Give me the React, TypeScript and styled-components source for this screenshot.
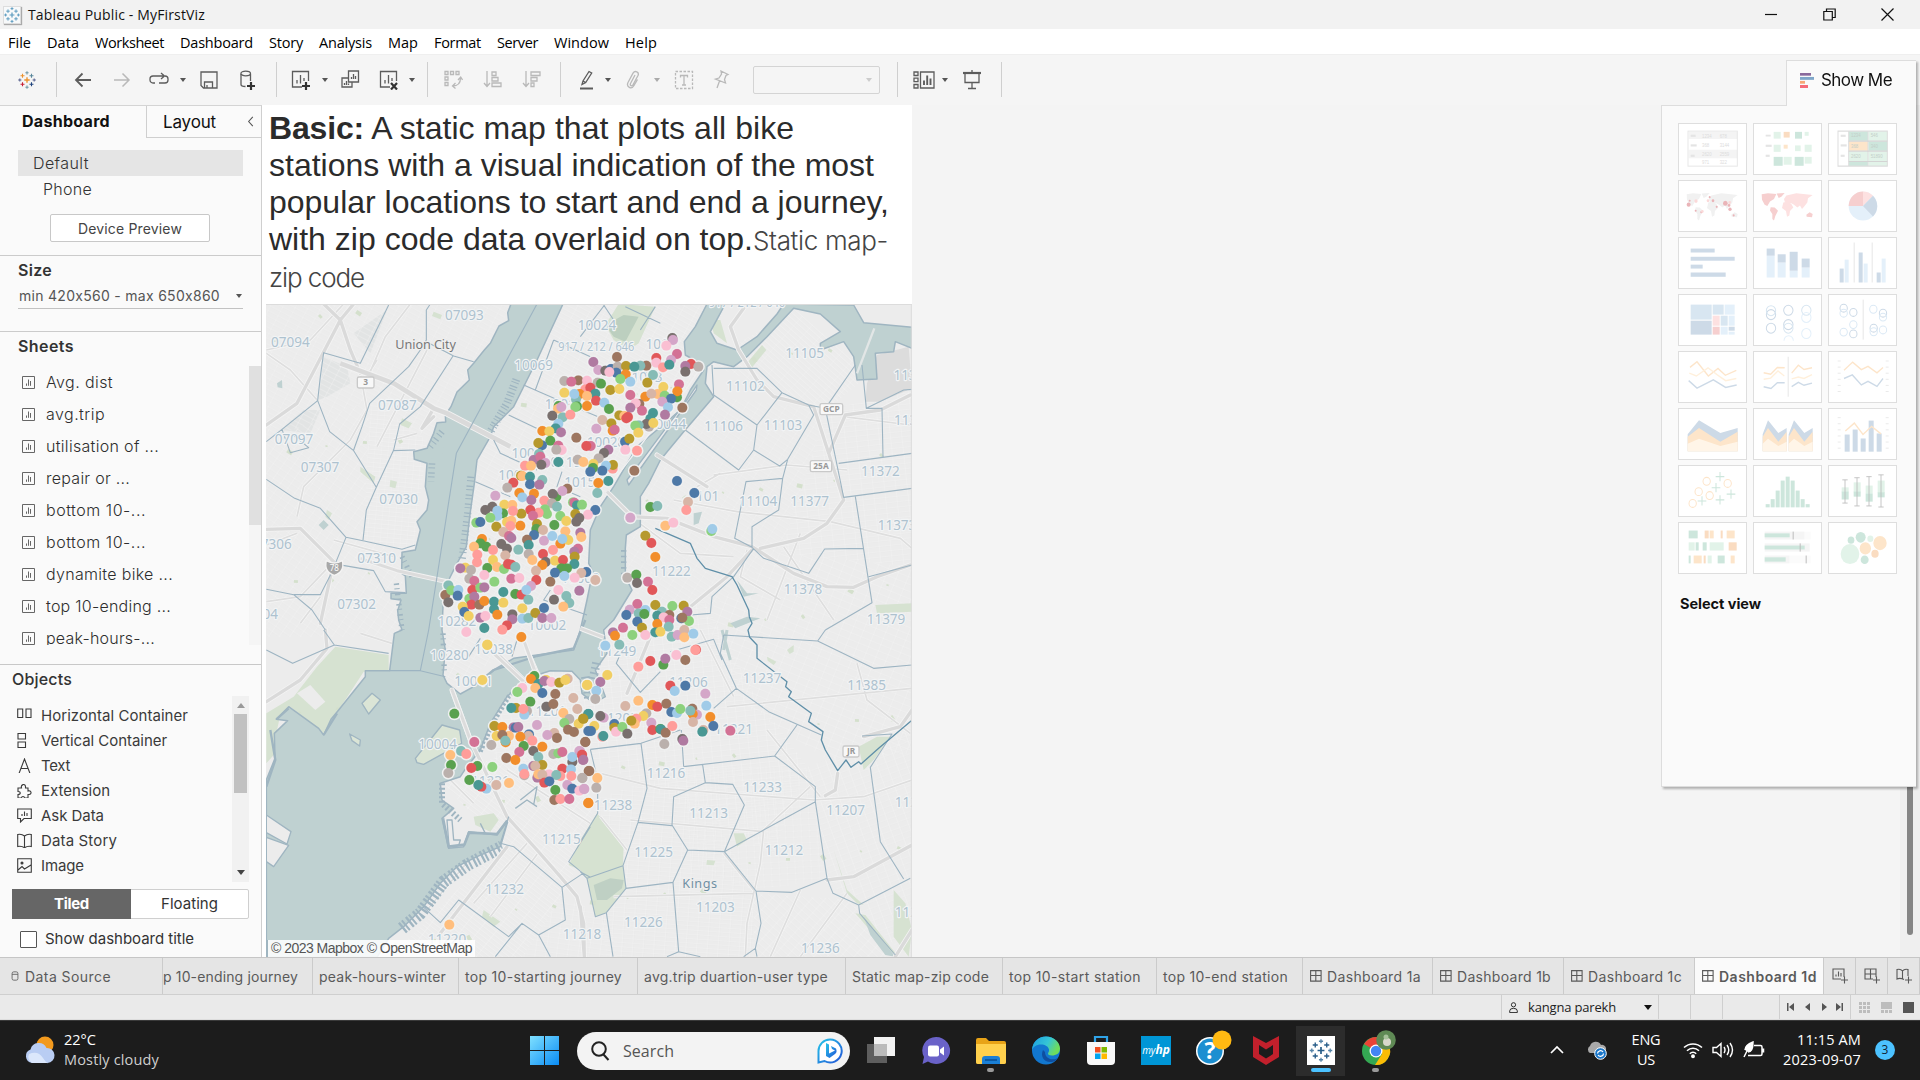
import React, { useLayoutEffect, useRef, useState } from 'react';
import styled, { createGlobalStyle, css } from 'styled-components';

const GlobalStyle = createGlobalStyle`
  * { box-sizing: border-box; }
  html, body { margin: 0; padding: 0; }
  body { width: 1920px; height: 1080px; overflow: hidden; background: #f4f4f4; font-family: Inter, "Open Sans", sans-serif; color: #333; }
  svg { display: block; flex: none; }
`;

const uiFont = '"Open Sans", "Noto Sans", sans-serif';
const bodyFont = 'Inter, "Open Sans", sans-serif';

/* ---------- text tracked out or in to a set measure ---------- */
const Tracked = styled.span`
  display: inline-block;
  white-space: pre;
  flex: none;
  font-variant-ligatures: none;
  font-feature-settings: "calt" 0;
`;
function Fit({ w, children }: { w: number; children: string }) {
  const ref = useRef<HTMLSpanElement>(null);
  const [spacing, setSpacing] = useState(0);
  useLayoutEffect(() => {
    const el = ref.current;
    if (!el) return;
    const natural = el.getBoundingClientRect().width;
    setSpacing((w - natural) / children.length);
  }, [w, children]);
  return <Tracked ref={ref} style={{ letterSpacing: spacing }}>{children}</Tracked>;
}

/* ---------- window frame ---------- */
const Screen = styled.div`
  width: 1920px; height: 1080px; display: flex; flex-direction: column; overflow: hidden;
`;
const TitleBar = styled.header`
  height: 29px; flex: none; background: #f2f2f2; display: flex; align-items: center; padding-left: 3px;
  font: 14px ${uiFont}; color: #111;
`;
const TitleText = styled.div`margin-left: 7px; flex: 1;`;
const AppBadge = styled.div`
  width: 18px; height: 18px; background: #f7f9fa; border: 1px solid #ddd; box-shadow: 1px 1px 1px #aaa; display: grid; place-items: center;
`;
const WindowButtons = styled.div`display: flex; gap: 45px; padding-right: 26px; align-items: center;`;
const MenuBar = styled.nav`
  height: 25px; flex: none; background: #fff; display: flex; gap: 16px; align-items: center; padding-left: 8px;
  font: 14.5px ${uiFont}; color: #000; padding-top: 1px;
`;
const Toolbar = styled.div`
  height: 51px; flex: none; background: #f5f5f5; display: flex; align-items: center; border-top: 1px solid #efefef; padding-bottom: 1px;
`;
const Slot = styled.div<{ $lead: number; $w?: number; $off?: boolean }>`
  margin-left: ${p => p.$lead}px; width: ${p => p.$w ?? 26}px; height: 26px; flex: none; display: grid; place-items: center;
  color: ${p => (p.$off ? '#b9b9b9' : '#5c5c5c')};
`;
const Divider = styled.i<{ $lead: number }>`
  margin-left: ${p => p.$lead}px; width: 1px; height: 35px; background: #cfcfcf; flex: none;
`;
const Caret = styled.i<{ $c?: string; $s?: number; $up?: boolean }>`
  display: block; width: 0; height: 0; flex: none; border: ${p => p.$s ?? 3}px solid transparent; border-bottom: 0;
  border-top: ${p => (p.$s ?? 3) + 1}px solid ${p => p.$c ?? '#555'};
  ${p => p.$up && css`transform: rotate(180deg);`}
`;
const FitSelect = styled.div`
  margin-left: 19px; width: 127px; height: 28px; border: 1px solid #d4d4d4; border-radius: 2px; display: flex; align-items: center;
  justify-content: flex-end; padding-right: 7px; background: #f5f5f5;
`;
const Workspace = styled.div`flex: 1; min-height: 0; display: flex; background: #f4f4f4;`;

/* ---------- side bar ---------- */
const Side = styled.aside`
  width: 262px; flex: none; background: #fafafa; border-right: 1px solid #cfcfcf; border-top: 1px solid #d4d4d4; display: flex; flex-direction: column;
`;
const SideTabs = styled.div`height: 32px; display: flex; flex: none;`;
const SideTab = styled.div<{ $active?: boolean }>`
  display: flex; align-items: center; color: #111;
  ${p => p.$active
    ? css`width: 146px; padding: 0 0 2px 22px; font: 700 16px ${bodyFont};`
    : css`flex: 1; padding-left: 16px; border-left: 1px solid #cfcfcf; border-bottom: 1px solid #cfcfcf; font: 400 17px ${bodyFont}; background: #fafafa; justify-content: space-between; padding-right: 5px;`}
`;
const DevicePanel = styled.div`height: 117px; flex: none; padding: 12px 18px 0; font: 300 16px ${bodyFont};`;
const DeviceRow = styled.div<{ $selected?: boolean }>`
  height: 26px; line-height: 26px; background: ${p => (p.$selected ? '#e5e5e5' : 'transparent')}; padding-left: ${p => (p.$selected ? 15 : 25)}px;
`;
const DeviceButton = styled.button`
  display: block; margin: 12px 0 0 32px; width: 160px; height: 28px; border: 1px solid #c8c8c8; border-radius: 2px; background: #fff; padding: 0;
  font: 400 14px ${bodyFont}; color: #444;
`;
const SizePanel = styled.div`height: 76px; flex: none; border-top: 1px solid #cbcbcb; padding: 3px 18px 0;`;
const Heading = styled.h3<{ $weight?: number; $inset?: number }>`
  margin: 0; padding-left: ${p => p.$inset ?? 0}px; font: ${p => p.$weight ?? 600} 16px/22px ${bodyFont}; color: #333;
`;
const SizeSelect = styled.div`
  margin-top: 3px; height: 25px; border-bottom: 1px solid #c2c2c2; display: flex; align-items: center; justify-content: space-between;
  padding: 0 1px 1px; font: 400 14px ${bodyFont}; color: #555;
`;
const SheetsPanel = styled.div`height: 333px; flex: none; border-top: 1px solid #cbcbcb; padding: 3px 0 0;`;
const Scrolled = styled.div<{ $top: number }>`display: flex; justify-content: space-between; margin-top: ${p => p.$top}px;`;
const SheetList = styled.div`height: 279px; overflow: hidden; padding-left: 22px;`;
const SheetRow = styled.div`height: 32px; display: flex; align-items: center; gap: 11px; font: 300 16px ${bodyFont}; color: #2e2e2e;`;
const SheetTrack = styled.div`width: 12px; height: 279px; background: #f5f5f5;`;
const SheetThumb = styled.div`height: 159px; background: #e0e0e0;`;
const ObjectsPanel = styled.div`flex: 1; border-top: 1px solid #c8c8c8; padding: 3px 12px 0;`;
const ObjectList = styled.div`padding: 7px 0 0 5px; height: 186px;`;
const ObjectRow = styled.div`height: 25px; display: flex; align-items: center; gap: 9px; font: 400 15px ${bodyFont}; color: #3a3a3a;`;
const ObjectTrack = styled.div`
  width: 17px; height: 186px; background: #f1f1f1; display: flex; flex-direction: column; align-items: center; justify-content: space-between; padding: 7px 0;
`;
const ObjectThumb = styled.div`width: 13px; height: 79px; background: #c1c1c1; margin: 6px 0 auto;`;
const Toggle = styled.div`display: flex; margin-top: 7px; height: 30px; border: 1px solid #cfcfcf; border-radius: 2px; background: #fff;`;
const ToggleSide = styled.div<{ $on?: boolean }>`
  display: grid; place-items: center; font: ${p => (p.$on ? 700 : 400)} 15px ${bodyFont}; padding-bottom: 2px;
  color: ${p => (p.$on ? '#fff' : '#333')};
  ${p => p.$on ? css`width: 119px; background: #666; margin: -1px 0 -1px -1px;` : css`flex: 1;`}
`;
const TitleCheck = styled.label`display: flex; align-items: center; gap: 8px; margin: 10px 0 0 8px; font: 400 15px ${bodyFont};`;
const Box = styled.i`width: 17px; height: 17px; margin-top: 2px; border: 1px solid #555; border-radius: 1px; background: #fff;`;

/* ---------- dashboard canvas ---------- */
const Dashboard = styled.main`width: 650px; height: 852px; flex: none; background: #fff; padding: 5px 0 0 4px;`;
const DashTitle = styled.h1`
  margin: 0 0 0 3px; height: 194px; font: 400 32px/37px "Liberation Sans", Arial, sans-serif; color: #2b2b2b;
`;
const TitleLine = styled.div`height: 37px; white-space: nowrap;`;
const Light = styled.span`font: 300 26px ${bodyFont}; color: #444;`;
const MapFrame = styled.div`position: relative; width: 646px; height: 653px; overflow: hidden;`;
const Attribution = styled.div`
  position: absolute; left: 0; bottom: 0; height: 17px; padding: 0 3px; margin-left: 1px; background: rgba(255,255,255,.86); border-left: 1px solid #9fb5c0;
  font: 14px/17px "Liberation Sans", Arial, sans-serif; color: #555;
`;
const Blank = styled.div`flex: 1; display: flex; justify-content: flex-end; position: relative;`;
const VTrack = styled.div`width: 20px; background: #efefef; display: flex; flex-direction: column; align-items: center;`;
const VThumb = styled.div`width: 6px; height: 180px; margin: 650px 0 0 0; background: #858585; border-radius: 3px;`;

/* ---------- Show Me ---------- */
const ShowMe = styled.section`
  position: absolute; right: 4px; top: -45px; width: 255px; display: flex; flex-direction: column; align-items: flex-end;
  filter: drop-shadow(2px 2px 1px rgba(0,0,0,.28));
`;
const ShowTab = styled.div`
  width: 130px; height: 46px; margin-bottom: -1px; position: relative; z-index: 1; background: #fafafa; border: 1px solid #ddd; border-bottom: 0; border-right: 0;
  display: flex; align-items: center; gap: 7px; padding: 0 0 7px 13px; font: 400 17px ${bodyFont}; color: #111;
`;
const ShowBody = styled.div`width: 255px; height: 682px; background: #fafafa; border: 1px solid #ddd; border-right: 0; padding: 17px 0 0 16px;`;
const Gallery = styled.div`display: grid; grid-template-columns: repeat(3, 69px); column-gap: 6px; grid-auto-rows: 57px;`;
const Thumb = styled.div`width: 69px; height: 52px; border: 1px solid #dedede; background: #fff; overflow: hidden;`;
const SelectView = styled.div`margin: 13px 0 0 2px; font: 700 14.5px/24px ${bodyFont}; color: #111;`;

/* ---------- sheet tabs and status ---------- */
const TabStrip = styled.div`height: 38px; flex: none; background: #e5e5e5; border-top: 1px solid #c6c6c6; border-bottom: 1px solid #cfcfcf; display: flex;`;
const SheetTab = styled.div<{ $w: number; $pad?: number; $on?: boolean }>`
  width: ${p => p.$w}px; flex: none; padding-left: ${p => p.$pad ?? 6}px; border-right: 1px solid #cbcbcb; display: flex; align-items: center; gap: 5px; overflow: hidden;
  font: ${p => (p.$on ? 600 : 400)} 14px ${bodyFont}; color: #5a5a5a; background: ${p => (p.$on ? '#fafafa' : 'transparent')};
`;
const StatusBar = styled.div`height: 25px; flex: none; background: #eaeaea; display: flex; justify-content: flex-end; border-bottom: 1px solid #ddd;`;
const StatusCell = styled.div<{ $w: number; $gap?: number }>`
  width: ${p => p.$w}px; border-left: 1px solid #cfcfcf; display: flex; align-items: center; padding: 0 6px; gap: ${p => p.$gap ?? 0}px; font: 13px ${uiFont}; color: #222;
`;

/* ---------- taskbar ---------- */
const Taskbar = styled.footer`height: 60px; flex: none; background: #1c1c1c; border-top: 1px solid #3a3a3a; display: flex; align-items: center; color: #fff; font: 14.5px/20px ${uiFont};`;
const Weather = styled.div`width: 505px; padding: 0 0 2px 24px; display: flex; align-items: center; gap: 8px;`;
const Muted = styled.div`color: #cfcfcf;`;
const StartSlot = styled.div`width: 72px; padding-left: 25px;`;
const Search = styled.div`
  width: 273px; height: 38px; border-radius: 19px; background: #f3f3f3; display: flex; align-items: center; padding: 0 7px 0 13px; gap: 13px; color: #555; font-size: 16px;
`;
const Grow = styled.div`flex: 1;`;
const Apps = styled.div`display: flex; margin-left: 3px;`;
const AppSlot = styled.div<{ $on?: boolean; $mark?: boolean }>`
  width: 55px; height: 59px; display: flex; flex-direction: column; align-items: center; padding-top: 15px;
  &::after {
    content: ''; margin-top: 3px; height: 4px; border-radius: 2px; width: ${p => (p.$on ? 20 : 7)}px;
    background: ${p => (p.$on ? '#4cc2ff' : p.$mark ? '#9a9a9a' : 'transparent')};
  }
  ${p => p.$on && css`background: linear-gradient(#2c2c2c,#2c2c2c) center / 49px 50px no-repeat;`}
`;
const Tray = styled.div`margin-left: auto; display: flex; align-items: center; padding-bottom: 2px;`;
const TrayCloud = styled.div`margin-left: 22px;`;
const TrayStatus = styled.div`display: flex; gap: 9px; margin-left: 17px;`;
const Lang = styled.div`width: 40px; text-align: center; margin-left: 18px;`;
const Clock = styled.div`text-align: right; margin-left: 18px;`;
const Count = styled.div`
  width: 20px; height: 20px; border-radius: 50%; background: #4cc2ff; color: #123; font: 12px/20px ${uiFont}; text-align: center; margin: 0 25px 0 14px;
`;

/* ---------- icons ---------- */
const Ic = ({ s = 18, vb = '0 0 18 18', sw = 1.3, children }: any) => (
  <svg width={s} height={s} viewBox={vb} fill="none" stroke="currentColor" strokeWidth={sw}>{children}</svg>
);
const plus = (x: number, y: number, r: number, c: string, w = 1.2) => (
  <path key={`${x}-${y}`} d={`M${x - r} ${y}H${x + r}M${x} ${y - r}V${y + r}`} stroke={c} strokeWidth={w} />
);
const TableauMark = ({ s, mono }: { s: number; mono?: string }) => (
  <svg width={s} height={s} viewBox="0 0 20 20" fill="none">
    {plus(10, 10, 3, mono ?? '#eb912c', 1.5)}
    {plus(5, 5.2, 2.2, mono ?? '#eb912c')}{plus(15, 5.2, 2.2, mono ?? '#59879b')}
    {plus(5, 14.8, 2.2, mono ?? '#c72035')}{plus(15, 14.8, 2.2, mono ?? '#1f447e')}
    {plus(10, 2, 1.8, mono ?? '#7099a6')}{plus(10, 18, 1.8, mono ?? '#7099a6')}
    {plus(2, 10, 1.8, mono ?? '#5b6591')}{plus(18, 10, 1.8, mono ?? '#5b6591')}
  </svg>
);
const SheetGlyph = () => <Ic s={13} vb="0 0 13 13" sw={1}><path d="M.5.5h12v12H.5zM4.5 9.800V7.500M6.500 9.800V3.500M8.500 9.800V5" stroke="#666" /></Ic>;
const DashGlyph = () => <Ic s={12} vb="0 0 12 12" sw={1.1}><path d="M.6.6h10.500v10.500H.6zM.6 5.500h10.500M5.800.6v10.500" /></Ic>;

const toolIcons: Record<string, React.ReactNode> = {
  back: <Ic sw={1.8}><path d="M17 9H2M8.500 2.500 2 9l6.500 6.500" /></Ic>,
  forward: <Ic sw={1.500}><path d="M1 9h15M9.500 2.500 16 9l-6.500 6.500" /></Ic>,
  loop: <Ic s={20} vb="0 0 20 18"><path d="M6 12H4a3 3 0 0 1-3-3V8a3 3 0 0 1 3-3h11M12 2l3.500 3L12 8M16 5h0a3 3 0 0 1 3 3v1a3 3 0 0 1-3 3h-6" /></Ic>,
  save: <Ic><path d="M1 1h16v16H3.500L1 14.500zM4.500 17v-6h8v6M7 17v-3" /></Ic>,
  db: <Ic s={20} vb="0 0 20 20"><path d="M3 4v10.500c0 1 1.500 2 4.500 2M12.500 4v7" /><ellipse cx="7.700" cy="3.500" rx="4.800" ry="2.300" /><path d="M9 16h8M13 12v8" strokeWidth="2.200" stroke="#333" /></Ic>,
  add: <Ic s={20} vb="0 0 20 20"><path d="M11 17H1.500V1.500h16V11M6 13.500V10M9.500 13.500V5M13 11V8" /><path d="M11 16h8M15 12v8" strokeWidth="2.200" stroke="#333" /></Ic>,
  dup: <Ic s={20} vb="0 0 20 20"><path d="M8.500 1h10v11h-10zM8.500 8H2v9h10v-5M11.500 9V7M13.500 9V4M15.500 9V6M4.500 15v-2M6.500 15v-4M8.500 15v-1.500" /></Ic>,
  clear: <Ic s={20} vb="0 0 20 20"><path d="M11 17H1.500V1.500h16V11M6 13.500V10M9.500 13.500V5M13 11V8" /><path d="m12 13 6 6.500m0-6.500-6 6.500" strokeWidth="2.200" stroke="#333" /></Ic>,
  swap: <Ic s={20} vb="0 0 20 20"><path d="M2 1.500h3v3H2zM7.500 1.500h3v3h-3zM13 1.500h3v3h-3zM2 7h3v3H2zM2 12.500h3v3H2zM17.500 8c0 5-3 8-8 8M15 10l2.700-3 1.800 3M12.500 13l-3 3 3 2.500" /></Ic>,
  asc: <Ic s={20} vb="0 0 20 20"><path d="M4 1v15M1 13l3 3.500L7 13M9 2h4v3.500H9zM9 7.500h6V11H9zM9 13h9v3.500H9z" /></Ic>,
  desc: <Ic s={20} vb="0 0 20 20"><path d="M4 1v15M1 13l3 3.500L7 13M9 2h9v3.500H9zM9 7.500h6V11H9zM9 13h3v3.500H9z" /></Ic>,
  pen: <Ic s={20} vb="0 0 20 20"><path d="M5 14.500 6 11l6-9.500 2.700 1.500-6 9.500zM6 11l2.700 1.500" /><path d="M3 18.500h13" strokeWidth="2" /></Ic>,
  clip: <Ic s={20} vb="0 0 20 20"><path d="M12 5 7.500 13.500c-1 2 1.500 3.300 2.500 1.300l5-9.300c1.500-3.500-3-5.500-5-2.300L5 12.500c-2 4.500 3.500 7.500 6 3l3.500-6" /></Ic>,
  text: <Ic s={20} vb="0 0 20 20"><path d="M1.500 1.500h17v17h-17z" strokeDasharray="2.500 1.500" /><path d="M6.500 7.500v-2h7v2M10 5.500v9.500M8 15h4" /></Ic>,
  pin: <Ic s={20} vb="0 0 20 20"><path d="m10 1 7 3.500-2 1-1.500 4 1 3.500L4.500 9l3.500-1L10.500 4zM8.500 11 6 18" /></Ic>,
  cards: <Ic s={22} vb="0 0 22 20"><path d="M1 2h4v3.500H1zM1 8.200h4v3.500H1zM1 14.500h4V18H1zM7.500 2H21v16H7.500z" /><path d="M11 15v-4.500M14.200 15V5.500M17.500 15V8.500" strokeWidth="1.900" /></Ic>,
  present: <Ic s={20} vb="0 0 20 20"><path d="M1 3h18" strokeWidth="2.200" /><path d="M3 3v9.500h14V3M10 12.500v6M6 18.500h8M10 0v3" /></Ic>,
};
type Tool = ['i' | 'x' | 'c' | 'cx' | 's' | 'box' | 'logo', number, string?];
const tools: Tool[] = [
  ['logo', 14], ['s', 16], ['i', 13, 'back'], ['x', 13, 'forward'], ['i', 11, 'loop'], ['c', 7], ['i', 9, 'save'], ['i', 13, 'db'], ['s', 15],
  ['i', 11, 'add'], ['c', 7], ['i', 8, 'dup'], ['i', 13, 'clear'], ['c', 6], ['s', 11], ['x', 12, 'swap'], ['x', 14, 'asc'], ['x', 13, 'desc'], ['s', 15],
  ['i', 13, 'pen'], ['c', 4], ['x', 8, 'clip'], ['cx', 7], ['x', 10, 'text'], ['x', 11, 'pin'], ['box', 19], ['s', 17], ['i', 13, 'cards'], ['c', 4], ['i', 10, 'present'], ['s', 16],
];
const menus: [string, number][] = [['File', 23], ['Data', 32], ['Worksheet', 69], ['Dashboard', 73], ['Story', 34], ['Analysis', 53], ['Map', 30], ['Format', 47], ['Server', 41], ['Window', 55], ['Help', 32]];
const sheets: [string, number][] = [['Avg. dist', 67], ['avg.trip', 59], ['utilisation of ...', 113], ['repair or ...', 84], ['bottom 10-...', 100], ['bottom 10-...', 100], ['dynamite bike ...', 127], ['top 10-ending ...', 125], ['peak-hours-...', 109]];
const objects: [string, number, React.ReactNode][] = [
  ['Horizontal Container', 147, <Ic s={15} vb="0 0 15 15" sw={1.100}><path d="M.7 1h5v8.500h-5zM9 1h5v8.500H9z" /></Ic>],
  ['Vertical Container', 126, <Ic s={15} vb="0 0 15 15" sw={1.100}><path d="M1 .5h7.500V6H1zM1 9h7.500v5.500H1z" /></Ic>],
  ['Text', 29, <Ic s={15} vb="0 0 15 15" sw={1.100}><path d="M2 15.500 7.500 1 13 15.500M4 10.500h7" /></Ic>],
  ['Extension', 69, <Ic s={15} vb="0 0 15 15" sw={1.100}><path d="M1 5h3.500c-1-3.500 3.500-5 4-1.500V5H11v3c3-1 4.500 3 1 3.500h-1V15H7.500c0-2-3-2-3 0H1v-3.500c3 0 3-3 0-3z" /></Ic>],
  ['Ask Data', 63, <Ic s={15} vb="0 0 15 15" sw={1.100}><path d="M.7 1h13.600v9.500H7L3.500 14v-3.500H.7zM5 8V6M7.500 8V3.500M10 8V5" /></Ic>],
  ['Data Story', 76, <Ic s={15} vb="0 0 15 15" sw={1.100}><path d="M7.500 3C5 1 3 1 .7 1.500v12c2.300-.5 4.300-.5 6.800 1.300 2.500-1.800 4.500-1.800 6.800-1.300v-12C12 1 10 1 7.500 3zV14.500" /></Ic>],
  ['Image', 43, <Ic s={15} vb="0 0 15 15" sw={1.100}><path d="M.7.7h13.600v13.600H.7zM1 12l4-3.500L7.500 11 14 7" /><circle cx="5" cy="5" r="1" fill="currentColor" /></Ic>],
];

/* ---------- map ---------- */
const palette: Record<string, string> = {
  B: '#4e79a7', b: '#a0cbe8', O: '#f28e2b', o: '#ffbe7d', G: '#59a14f', g: '#8cd17d', Y: '#b6992d', y: '#f1ce63', T: '#499894', t: '#86bcb6',
  R: '#e15759', r: '#ff9d9a', K: '#79706e', k: '#bab0ac', M: '#d37295', m: '#fabfd2', P: '#b07aa1', p: '#d4a6c8', N: '#9d7660', n: '#d7b5a6',
};
/* station lists: "x y colour", in thirds of a pixel from the origin of their sheet */
const manhattan = `726 24 K,728 30 p,708 47 m,740 72 M,722 90 p,678 84 R,678 98 m,698 112 r,717 104 T,782 102 R,765 108 P,804 110 k,765 125 K,560 81 N,489 96 P,504 120 p,525 122 K,542 117 B,562 110 k,558 128 B,537 126 m,587 108 Y,648 107 N,630 107 t,612 110 T,586 133 O,570 147 g,600 155 b,668 135 t,651 158 Y,
402 153 k,444 151 N,423 155 M,470 152 m,502 158 k,512 161 G,465 178 r,480 173 R,540 180 Y,567 177 y,402 188 y,448 192 O,495 191 T,437 208 t,432 192 b,470 198 o,497 212 R,522 218 b,470 228 O,385 228 G,383 236 o,393 231 p,440 229 G,435 231 g,536 237 G,366 257 K,397 262 t,420 254 r,384 281 b,376 295 T,392 307 P,336 303 O,357 304 y,360 332 G,335 346 B,324 339 Y,384 347 M,394 360 m,378 359 k,438 323 N,481 348 M,468 348 R,516 270 n,498 296 p,543 280 Y,547 302 O,553 299 M,
600 195 M,645 200 O,682 192 o,663 191 n,699 171 y,746 163 M,740 202 G,703 197 g,741 184 O,722 206 B,696 215 p,713 232 b,756 233 N,704 254 P,627 222 N,616 220 m,600 233 P,635 242 M,567 256 Y,582 258 o,588 265 R,593 261 R,668 249 T,660 266 T,656 290 k,648 282 K,625 286 t,615 287 g,669 279 y,624 308 y,584 335 B,597 326 Y,585 359 m,620 362 r,534 359 P,521 369 K,505 385 k,489 402 y,488 414 G,480 425 B,442 389 k,459 396 o,547 416 r,548 405 Y,527 407 b,516 422 B,504 459 O,534 453 T,501 489 t,612 422 N,
326 372 t,310 390 P,330 380 M,345 399 p,333 404 K,384 396 T,284 407 r,302 407 o,272 437 Y,276 438 o,299 440 T,299 463 B,336 450 t,327 464 P,249 458 R,231 473 k,195 497 p,267 489 O,276 502 b,311 491 O,303 510 P,342 512 r,378 500 G,367 492 K,411 476 N,396 483 p,365 520 k,428 517 g,432 518 M,440 526 T,455 524 g,495 540 B,473 554 m,380 530 t,390 558 g,344 538 g,350 552 g,325 548 r,300 540 R,308 557 M,273 551 Y,222 524 y,246 525 o,248 543 r,186 530 K,165 540 K,218 550 G,201 542 b,201 558 b,138 578 g,150 576 B,180 563 g,198 590 Y,230 576 y,243 572 o,240 588 r,270 587 O,320 582 Y,318 597 G,338 600 n,372 585 G,408 573 y,435 552 Y,447 564 K,438 575 K,405 604 o,450 608 P,453 621 o,
311 615 B,341 632 p,366 618 b,390 641 O,414 630 y,396 627 b,290 629 N,219 606 n,236 618 M,243 624 P,155 627 O,150 640 G,131 650 o,168 650 G,188 660 r,213 642 K,230 656 K,264 659 t,295 645 T,295 672 k,225 676 n,338 672 R,368 660 r,443 656 M,432 665 P,141 674 r,140 697 r,188 690 y,171 714 G,200 711 o,221 717 g,233 702 R,243 704 R,255 711 t,306 690 o,346 696 K,336 705 O,374 692 y,398 690 R,433 680 Y,432 702 T,393 715 G,410 715 G,374 728 B,402 738 b,468 726 B,453 729 n,433 743 m,495 750 n,105 713 y,90 715 P,122 720 k,117 746 k,132 753 M,162 735 m,192 755 g,243 746 M,267 744 m,317 722 n,318 750 R,302 768 p,360 755 N,384 780 m,371 809 K,447 782 P,408 798 t,417 819 t,399 830 o,
54 766 t,45 795 N,54 817 K,63 781 g,84 780 b,82 797 B,126 780 R,150 773 g,162 772 P,117 806 g,132 800 P,123 824 R,147 824 N,162 813 O,97 830 y,102 846 B,115 858 y,191 815 T,191 838 T,219 786 T,219 818 y,255 792 G,274 794 R,288 780 b,294 809 t,276 835 y,201 854 O,150 863 P,165 858 m,162 894 T,246 853 K,246 868 P,230 886 R,216 899 r,276 866 b,294 864 t,315 849 Y,341 834 B,336 864 P,363 864 p,108 906 m,273 921 O,171 944 y,
740 453 B,792 489 B,773 516 n,768 540 r,660 531 G,681 528 t,600 563 p,705 587 o,729 578 m,843 603 g,846 597 b,645 617 Y,663 639 R,675 681 O,591 743 k,618 734 G,620 759 K,653 755 M,666 780 R,
621 822 M,598 839 p,588 855 B,645 840 b,625 850 t,642 852 G,675 825 Y,726 828 g,695 845 t,760 827 Y,771 845 P,681 857 T,717 855 N,700 862 m,621 875 B,681 882 O,753 865 B,776 873 g,756 863 N,717 870 M,715 890 t,635 893 Y,578 893 M,548 907 P,554 917 O,606 915 g,645 915 m,675 907 T,690 905 y,724 920 t,742 915 p,762 900 n,762 922 o,789 911 b,525 947 b,567 944 t`;
const brooklynWest = `822 138 G,812 147 O,857 150 y,834 162 T,852 153 P,873 156 m,922 146 n,897 158 Y,915 150 y,786 174 m,825 174 o,846 189 B,771 186 g,885 192 N,939 204 n,980 165 y,810 215 G,858 230 K,879 222 N,951 237 n,767 234 Y,753 234 T,800 243 k,792 254 b,789 237 r,909 249 o,927 267 k,912 279 g,955 281 y,969 266 Y,984 252 T,830 285 p,923 299 N,941 306 N,984 303 B,702 288 Y,760 292 P,766 293 B,774 291 P,709 318 y,726 291 O,746 318 o,726 315 N,736 337 O,735 332 t,806 313 B,804 318 n,780 320 O,816 332 r,882 309 n,861 315 p,890 324 N,975 336 N,642 336 M,693 345 k,790 348 G,777 366 M,846 350 O,819 363 K,834 381 t,602 363 t,618 372 r,570 375 o,572 405 G,564 429 k,738 384 N,765 390 O,965 375 R,957 363 p,968 390 P,879 372 k,894 370 g,906 366 M,936 396 K,936 381 b,651 408 G,633 414 R,696 411 g,789 416 b,846 405 Y,819 408 P,825 408 n,792 436 k,792 432 r,906 416 R,932 418 b,985 423 N,831 443 P,834 433 o,866 433 m,846 434 n,900 438 r,888 435 t,933 438 r,966 444 k,627 450 G,678 476 b,663 470 R,654 465 T,708 465 n,746 459 o,852 458 R,867 454 B,921 465 p,936 476 B,957 482 m,971 477 p,885 480 G,882 510 N,900 507 r,927 507 M,984 519 O,582 251 G,567 884 o,666 150 y,681 45 y`;
const brooklynEast = `347 59 R,345 60 r,288 75 m,315 90 N,249 104 G,255 86 P,210 93 R,174 110 r,81 135 y,60 156 P,21 165 y,48 182 b,45 207 k,270 167 R,283 183 b,315 167 B,375 191 p,378 227 b,174 212 o,135 228 n,216 225 O,231 230 R,258 221 N,273 246 B,290 249 b,300 237 g,336 236 N,350 254 p,337 252 O,330 242 t,390 261 O,399 288 B,338 276 n,369 300 n,366 305 T,450 302 M,198 250 k,189 258 y,168 266 r,163 281 o,153 272 Y,213 278 p,216 300 R,240 297 G,242 298 T,256 308 N,276 288 r,252 342 k,306 327 K,309 332 P,102 282 B,102 293 Y,70 263 p,60 258 K,107 305 m,126 291 g,141 311 K,66 320 r,69 318 T,42 288 y,24 252 T,32 303 B,9 266 Y,15 336 N,0 365 p,5 374 R,9 389 P,27 423 N,6 444 k,51 444 o,48 473 k,12 477 p,24 519 O`;
const parse = (s: string, dx: number, dy: number) =>
  s.split(',').map(t => { const [x, y, c] = t.trim().split(/\s+/); return { x: +x + dx, y: +y + dy, c: palette[c] }; });
const stations = [...parse(manhattan, 510, 90), ...parse(brooklynWest, 0, 990), ...parse(brooklynEast, 960, 990)];

const zipLabels: [number, number, string][] = [
  [90, 142, '07094'], [612, 61, '07093'], [411, 329, '07087'], [101, 431, '07097'], [179, 517, '07307'], [415, 611, '07030'], [48, 746, '7306'], [349, 789, '07310'], [289, 926, '07302'], [30, 958, '04'],
  [820, 211, '10069'], [1010, 91, '10024'], [1190, 146, '101'], [900, 328, '1001'], [800, 474, '1001'], [760, 541, '1001'], [905, 500, '10119'], [970, 561, '10154'], [1037, 441, '10028'], [1220, 387, '10044'], [1160, 245, '1003'],
  [1455, 273, '11102'], [1390, 394, '11106'], [1568, 389, '11103'], [1633, 174, '11105'], [1934, 240, '113'], [1936, 376, '113'], [1860, 527, '11372'], [1910, 691, '11373'], [1648, 617, '11377'], [1493, 618, '11104'], [1342, 603, '101'],
  [1233, 828, '11222'], [1628, 883, '11378'], [1877, 971, '11379'], [860, 990, '10002'], [590, 978, '10282'], [960, 850, '10009'], [567, 1081, '10280'], [700, 1061, '10038'], [640, 1157, '10041'], [532, 1346, '10004'], [860, 1248, '11201'], [690, 1458, '11231'],
  [903, 1631, '11215'], [733, 1781, '11232'], [965, 1917, '11218'], [560, 1933, '11220'], [1070, 1068, '11249'], [1284, 1162, '11206'], [1505, 1150, '11237'], [1819, 1169, '11385'], [1420, 1303, '11221'], [1075, 1270, '11205'],
  [1217, 1434, '11216'], [1507, 1477, '11233'], [1058, 1531, '11238'], [1345, 1554, '11213'], [1756, 1545, '11207'], [1180, 1671, '11225'], [1571, 1666, '11212'], [1365, 1835, '11203'], [1149, 1881, '11226'], [1680, 1959, '11236'], [1938, 1521, '112'], [1938, 1851, '112'],
];
const boroughs: [number, number, string, string, number][] = [[496, 146, 'Union City', '#777', 182], [1318, 1765, 'Kings', '#6f8fa3', 104]];
const shields: [number, number, number, string][] = [[316, 247, 50, '3'], [1713, 327, 68, 'GCP'], [1682, 498, 64, '25A'], [1772, 1354, 48, 'JR']];

const poly = (s: string, dx = 0, dy = 0) =>
  s.split('|').map(part => {
    const n = part.trim().split(/[\s,]+/).map(Number);
    let d = '';
    for (let i = 0; i < n.length; i += 2) d += `${i ? 'L' : 'M'}${n[i] + dx} ${n[i + 1] + dy}`;
    return d;
  }).join('');

const water = poly('752,12 742,38 745,62 716,78 700,110 690,130 672,150 640,190 622,210 627,240 590,276 572,320 555,345 556,366 530,368 520,400 500,445 460,455 462,478 500,490 495,560 505,600 500,630 470,665 480,690 465,750 425,757 424,820 435,828 438,880 392,880 392,896 422,900 412,932 415,960 425,990 402,1000 388,1112 315,1112 315,1130 235,1230 212,1258 190,1305 175,1285 85,1220 48,1258 82,1262 42,1300 44,1375 18,1440 18,1972 350,1972 385,1915 430,1880 490,1820 540,1750 590,1700 650,1670 720,1640 745,1555 710,1605 625,1595 610,1640 565,1645 545,1555 580,1525 545,1500 540,1450 600,1430 620,1400 660,1350 690,1270 740,1190 800,1135 870,1112 935,1114 960,1140 965,1180 1000,1210 1035,1190 1005,1110 1040,1060 1030,990 1060,960 1115,870 1095,830 1095,745 1098,705 1140,680 1140,590 1165,550 1200,480 1270,395 1360,290 1335,250 1340,200 1360,185 1420,200 1460,170 1520,110 1600,25 1680,42 1740,95 1680,130 1680,150 1750,125 1780,170 1790,240 1850,237 1845,160 1900,155 1905,125 1955,145 1955,82 1810,68 1780,15 1570,12 1550,42 1490,110 1430,150 1370,130 1350,95 1395,12 1340,12 1305,80 1272,125 1275,165 1310,185 1330,210 1290,270 1260,330 1190,390 1130,440 1060,560 1020,620 990,690 985,790 1000,820 990,850 980,900 960,990 940,1050 830,1065 760,1075 700,1110 640,1160 600,1182 560,1150 548,1125 555,1050 545,990 550,870 590,790 618,740 628,650 642,550 650,480 690,410 700,380 760,320 830,180 908,12') + 'Z';
const islands = [
  '1310,255 1308,270 1105,555 1100,540 1220,380 1280,300', '465,1375 545,1275 598,1290 604,1330 490,1393 470,1388', '305,1210 335,1180 360,1200 325,1242', '268,1302 300,1320 298,1338 275,1322',
  '18,1545 92,1595 80,1632 18,1598', '18,1612 85,1636 40,1700 18,1685', '560,1560 575,1560 580,1620 600,1620 595,1636 566,1640',
].map(s => poly(s) + 'Z');
const zips = [
  poly('385,15 300,190 190,158 180,230 172,302 65,388 18,425|172,302 208,395 280,452 348,562 318,630 308,720|510,12 498,30 498,120 480,150 445,200 328,310 305,380 280,450|578,168 480,320 418,372 400,450 348,562|498,125 580,168 640,185|18,538 103,595 180,625 257,712 308,722 425,748 465,735|257,712 213,820 180,884 100,884 18,868|213,790 340,812 375,875 435,878|100,884 155,930 195,990|65,388 90,458 145,443 95,402|400,452 465,450|880,120 825,270|790,255 905,305|745,345 860,400|700,420 720,460 830,510|645,545 750,590|880,120 1000,175|905,305 1060,370|870,870 850,900 980,945|905,515 890,560 960,590'),
  poly('395,195 400,285 530,375 605,278 530,205 400,205|530,375 520,450 475,510 315,390|520,450 598,498 622,478 700,345 685,315 605,278|622,478 607,535 497,545 463,715 515,742 515,680 595,630 607,535|735,325 825,195|685,315 735,325 790,592 995,565|775,490 995,460|845,195 858,325 905,325 908,470|858,325 970,270 995,268|825,590 875,908 735,990|848,745 733,747 685,820 550,775 515,742|865,830 995,795|520,745 460,830 395,890 390,940 330,945|75,12 0,110|135,20 240,70|225,20 180,90|180,210 260,250|60,0 100,60', 960),
  poly('430,15 712,33 880,115 995,105|712,33 735,0|430,15 420,70 468,175 565,245 723,315|468,175 400,235|650,285 583,378 705,470 705,515 740,745 758,790 835,825 990,745|583,378 310,410 303,300|367,405 375,458 280,500 275,585 322,660 432,665 492,525 457,463 375,458|705,515 432,665 527,783 635,787 740,745|322,660 278,757 295,965 260,980|278,757 137,775 128,707 173,577 275,587|182,340 200,475 173,577|30,358 182,340 300,300|30,358 52,450 52,550 0,635|20,745 128,707|0,725 20,745 45,860 78,848 137,775|78,848 98,980|527,783 542,880 525,955 530,980|845,318 935,312 870,412 900,635 970,747|835,825 838,850 945,975|295,965 360,980|270,65 400,28 425,90|125,60 108,100 180,187 240,125|525,955 490,980', 960, 990),
  poly('18,60 97,100 222,45 190,0|222,45 385,70|760,650 905,772 915,870 835,915 785,880 705,980|905,772 968,730 990,742|968,730 925,695 990,590|835,915 870,980|488,830 540,878 595,810 745,920 785,880|745,560 720,640 760,650|625,80 660,25|770,30 755,80', 0, 990),
  poly('830,12 588,460 505,990 480,1112 388,1112|480,1112 555,1130'),
].join('');
const roads = [
  poly('18,375 110,310 240,60 280,12|190,12 240,60 270,150 300,220|18,688 120,685 220,785 180,970|520,325 485,385 520,350'),
  poly('490,25 450,80 475,150 530,240 580,290 700,320 745,460 790,600 740,670 670,715 540,745|745,460 795,345 900,330 990,285|150,650 260,655 400,710 515,740 640,820 740,860 820,862 890,830 990,795|230,465 380,560|515,750 440,830 330,920', 960),
  poly('18,215 120,150 200,55 195,0|575,180 630,330 740,560 830,660 900,740 950,800 970,880 972,980|740,650 540,910|720,80 790,150|800,60 830,130', 0, 990),
  poly('995,240 960,290 850,320|210,20 140,190|740,750 820,740 995,645|772,430 765,480 735,497|0,830 12,980|995,900 945,980', 960, 990),
].join('');
const minorRoads = [
  poly('330,215 375,110 450,12|18,150 150,120 250,12|18,160 90,210 172,302|300,220 320,330 270,420 130,560 110,650|400,420 470,400|220,785 120,890 18,905|220,720 400,770|350,180 300,260|500,150 350,440|18,735 110,700|120,970 180,890'),
  poly('280,600 470,635 750,665 960,715 995,745|400,525 620,495 800,510|350,560 420,520|150,650 300,760 460,770|500,750 480,830 600,900|610,740 760,960|660,700 560,960|790,350 990,375', 960),
  poly('60,430 240,475 700,510 850,500 995,450|550,600 540,700 500,880 495,980|550,600 690,470|60,560 140,660|150,570 550,605|430,670 520,780|440,230 995,175|100,800 520,790|830,100 860,210 990,310|560,300 720,500|660,780 570,980|800,790 660,980|360,0 460,200', 960, 990),
  poly('300,10 395,40|740,420 990,580|660,650 500,840|800,640 640,820|840,660 690,860|560,440 640,520|550,300 640,380', 0, 990),
].join('');
const highwayBridge = poly('240,190 400,250 520,325 560,340 750,440');
const bridges = poly('300,775 410,812 560,845|1040,575 1110,645|575,1170 630,1320|790,1020 830,1130|700,1060 790,1145|960,985 1030,1012');
const parks = [
  poly('115,12 75,75 100,120 145,150 175,130 225,20', 960), poly('495,195 545,135 558,150 512,206', 960), poly('390,60 400,100 440,130 420,60', 960),
  poly('225,50 385,75 385,120 310,125 235,240 190,310 90,230 60,255 50,300 45,370 18,400 18,250 100,200 170,110', 0, 990),
  poly('480,400 550,290 600,305 600,340', 0, 990), poly('50,550 130,640 128,707 20,745 0,720 -35,705 0,630', 960, 990), poly('20,745 128,707 137,775 78,848 45,860', 960, 990),
  poly('835,350 890,320 930,320 880,390 850,420', 960, 990), poly('940,780 975,820 995,900 985,980 940,920', 960, 990), poly('825,850 855,855 950,975 920,960', 960, 990),
  poly('885,915 995,910 995,935 890,940', 960), poly('640,560 700,550 715,570 690,605 645,585', 0, 990), poly('670,840 720,875 700,890 665,860', 0, 990), poly('425,355 455,370 445,385 420,375'), poly('300,500 345,530 340,550 300,515'),
  poly('520,35 545,45 540,58 515,48'), poly('200,630 215,640 205,660 195,650'), poly('390,540 410,545 405,565 388,560'), poly('760,660 800,790 830,820 850,825 800,780', 960, 990), poly('460,610 490,610 500,630 470,650', 960, 990), poly('380,690 405,692 400,706 378,704', 960, 990), poly('560,80 588,95 580,105 562,92', 960, 990), poly('620,60 640,45 640,65 628,72', 960, 990),
].map(d => d + 'Z').join('');
/* small neighbourhood greens scattered over the land */
const greens = Array.from({ length: 80 }, (_, i) => ({ x: 40 + ((i * 397) % 1890), y: 30 + ((i * 683 + 91) % 1910), w: 7 + (i % 3) * 5, a: (i * 31) % 70 }));
const grids: [string, number, number, number][] = [
  ['18,12 760,12 500,420 330,300 18,420', 28, 34, 15], ['330,300 500,420 460,760 310,720', 5, 20, 13], ['18,420 330,300 310,720 425,760 430,1010 18,1010', 35, 26, 18],
  ['908,12 1400,12 1000,900 540,1180 620,500', 29, 40, 14], ['1100,560 1360,290 1700,330 1560,760 1330,940 1095,870', 33, 34, 15], ['1340,190 1600,25 1830,220 1700,330', 42, 40, 13],
  ['1700,330 1955,270 1955,800 1560,760', -6, 34, 16], ['1330,940 1560,760 1955,800 1955,1360 1700,1380 1430,1200', 22, 32, 20], ['1030,990 1330,900 1480,1180 1640,1400 1540,1660 980,1370 700,1400 700,1200 900,1100', -6, 28, 16],
  ['540,1440 760,1350 980,1370 1000,1600 900,1800 780,1980 380,1980 720,1640', 38, 42, 12], ['1000,1500 1280,1400 1480,1770 1480,1980 1040,1980 1000,1700', 4, 32, 13], ['1280,1400 1640,1400 1700,1740 1480,1770 1280,1700', -3, 24, 18],
  ['1640,1400 1955,1280 1955,1980 1840,1880 1700,1740', -20, 28, 18], ['1480,1780 1790,1800 1900,1980 1480,1980', 42, 30, 16], ['780,1980 900,1790 1050,1850 1070,1980', 8, 32, 15],
];

function ZipMap() {
  return (
    <svg width="646" height="653" viewBox="17 12 1938 1959" preserveAspectRatio="none" strokeLinejoin="round">
      <defs>
        {grids.map(([, a, w, h], i) => (
          <pattern key={i} id={`g${i}`} width={w} height={h} patternUnits="userSpaceOnUse" patternTransform={`rotate(${a})`}>
            <path d={`M0 2H${w}M2 0V${h}`} stroke="#dfdfdf" strokeWidth="1" /><path d={`M0 0H${w}M0 0V${h}`} stroke="#f8f8f8" strokeWidth="2.4" />
          </pattern>
        ))}
      </defs>
      <rect x="0" y="0" width="1960" height="1990" fill="#ececec" />
      <g fill="#e2e4e4"><path d={poly('190,170 260,200 270,250 200,290 175,300') + poly('60,390 130,330 180,330 150,400') + poly('280,100 380,30 330,160')} /></g>
      {grids.map(([p], i) => <path key={i} d={poly(p) + 'Z'} fill={`url(#g${i})`} opacity=".8" />)}
      <path d={parks} fill="#d6e2d1" />
      <g fill="#d4e0cc">{greens.map((g, i) => <rect key={i} x={g.x} y={g.y} width={g.w} height={g.w * 0.7} transform={`rotate(${g.a} ${g.x} ${g.y})`} />)}</g>
      <path d={poly('130,45 75,75 100,110 135,125 175,50', 960) + 'Z'} fill="#bccfbf" />
      <path d={poly('40,765 90,745 130,750 125,775 80,810 50,810', 960, 990) + 'Z'} fill="#bfd0c4" />
      <path d={poly('110,190 150,165 195,215 165,240', 0, 990) + 'Z'} fill="#ececec" />
      <path d={poly('890,165 985,140 995,265 900,305 855,305 860,250', 960) + 'Z'} fill="#dcdcdc" />
      <g fill="none" stroke="#f6f6f6"><path d={minorRoads} strokeWidth="9" /><path d={minorRoads} stroke="#dedede" strokeWidth="5" /></g>
      <path d={water} fill="#bfd1d1" stroke="#9fb5c1" strokeWidth="4.500" />
      <g fill="#bfd1d1">
        <path d={poly('520,430 560,445 530,480 500,470') + poly('50,250 65,240 66,265 52,262') + poly('175,675 190,660 205,675 190,690')} />
        <path d={poly('340,640 365,635 355,670 340,675', 960) + poly('450,970 500,950 540,955 465,985', 960) + poly('470,840 500,880 535,880 490,890', 960) + poly('850,860 945,980 915,975 870,915', 960, 990)} />
      </g>
      <path d={poly('425,0 450,90|440,0 430,60', 960, 990)} stroke="#bfd1d1" strokeWidth="9" fill="none" />
      {islands.map((d, i) => <path key={i} d={d} fill={i === 1 || i === 2 || i === 3 ? '#dbe5d6' : '#ececec'} stroke="#9fb5c1" strokeWidth="4" />)}
      <g fill="none" stroke="#9fb5c1">
        <path d={poly('768,238 740,310 690,395')} strokeWidth="24" strokeDasharray="4 5 3 9" />
        <path d={poly('632,530 622,640 605,780')} strokeWidth="22" strokeDasharray="4 7 3 13" />
        <path d={poly('545,395 510,440|515,490 512,545')} strokeWidth="20" strokeDasharray="4 8 3 12" />
        <path d={poly('548,1000 552,1120|425,770 455,830|408,850 425,990')} strokeWidth="16" strokeDasharray="5 10 3 13" />
        <path d={poly('425,1885 480,1840 550,1745 620,1695 725,1640')} strokeWidth="38" strokeDasharray="7 5 6 9" />
        <path d={poly('660,1355 700,1265 745,1190 800,1140')} strokeWidth="14" strokeDasharray="7 6" />
        <path d={poly('545,1450 545,1510 600,1560')} strokeWidth="18" strokeDasharray="6 7" />
        <path d={poly('640,1160 700,1110 830,1068 940,1045 975,960')} strokeWidth="7" />
        <path d={poly('975,1130 985,1200 1010,1080')} strokeWidth="26" strokeDasharray="5 10" />
        <path d={poly('1090,750 1090,840')} strokeWidth="16" strokeDasharray="5 12" />
        <path d={poly('548,1555 565,1640 612,1634 626,1598 710,1602 742,1560')} strokeWidth="8" />
        <path d={poly('765,1525 800,1500 830,1520|780,1500 830,1460 820,1515|660,1570 675,1600')} strokeWidth="4" />
        <path d={poly('30,1290 45,1380 18,1460|85,1225 48,1258|190,1305 230,1240')} strokeWidth="7" />
      </g>
      <path d={poly('1330,210 1290,270 1190,390 1060,560', -14, 0)} fill="none" stroke="#f1f1f1" strokeWidth="4" />
      <g fill="none" strokeLinecap="round"><path d={roads} stroke="#f4f4f4" strokeWidth="15" /><path d={roads} stroke="#dadada" strokeWidth="10" /></g>
      <g fill="none">
        <path d={highwayBridge} stroke="#f2f2f2" strokeWidth="20" /><path d={highwayBridge} stroke="#dadada" strokeWidth="14" />
        <path d={poly('1790,220 1842,85')} stroke="#e2e6e6" strokeWidth="7" />
        <path d={bridges} stroke="#f2f2f2" strokeWidth="15" /><path d={bridges} stroke="#dcdcdc" strokeWidth="9" />
      </g>
      <path d={zips} fill="none" stroke="#9db4c2" strokeWidth="3.300" />
      <path d={poly('225,685 330,730 350,775 375,805 455,830 470,855 505,930 507,950 515,970 503,990 508,1012 530,1035 530,1075 620,1145 616,1160 633,1175 625,1190 693,1240 685,1265 728,1295 723,1320 735,1350 772,1412 797,1380 812,1402 835,1385 842,1392 895,1345 993,1262', 960)} fill="none" stroke="#5f8fa8" strokeWidth="4" />
      <g fontFamily='"Noto Sans", sans-serif' textAnchor="middle">
        <g fontSize="41" fill="#aec2cf" stroke="#f2f4f5" strokeWidth="7" paintOrder="stroke">
          {zipLabels.map(([x, y, t], i) => <text key={i} x={x} y={y} textLength={t.length * 23.200} lengthAdjust="spacingAndGlyphs">{t}</text>)}
          <text x="1008" y="153" fontSize="38" textLength="228" lengthAdjust="spacingAndGlyphs">917 / 212 / 646</text>
          <text x="1460" y="20" fontSize="38" textLength="228" lengthAdjust="spacingAndGlyphs">917 / 212 / 646</text>
        </g>
        {boroughs.map(([x, y, t, c, w]) => <text key={t} x={x} y={y} fontSize="38" fill={c} stroke="#efefef" strokeWidth="6" paintOrder="stroke" textLength={w}>{t}</text>)}
        {shields.map(([x, y, w, t]) => (
          <g key={t}><rect x={x - w / 2} y={y - 16} width={w} height="33" rx="5" fill="#f8f8f8" stroke="#c9c9c9" strokeWidth="4" /><text x={x} y={y + 9} fontSize="25" fontWeight="700" fill="#999">{t}</text></g>
        ))}
        <path d="M198 782q24 14 48 0q8 34-24 44q-32-10-24-44z" fill="#a8a8a8" stroke="#f4f4f4" strokeWidth="4" /><text x="222" y="814" fontSize="24" fill="#fff">78</text>
      </g>
      <g fill="#f0f1f1">{stations.map((s, i) => <circle key={i} cx={s.x} cy={s.y} r="19.500" />)}</g>
      {stations.map((s, i) => <circle key={i} cx={s.x} cy={s.y} r="14.800" fill={s.c} stroke={s.c} strokeWidth=".5" />)}
      <path d="M17 13.500H1955M1953 12V1971" stroke="#dcdcdc" strokeWidth="3" fill="none" />
    </svg>
  );
}

/* ---------- Show Me thumbnails ---------- */
const rects = (s: string, fill: string) => (
  <g fill={fill}>{s.split('|').map((r, i) => { const [x, y, w, h] = r.trim().split(/[\s,]+/).map(Number); return <rect key={i} x={x} y={y} width={w} height={h} />; })}</g>
);
const rings = (s: string, r: number, stroke: string) => (
  <g fill="none" stroke={stroke} strokeWidth="3">{s.split('|').map((p, i) => { const [x, y] = p.split(',').map(Number); return <circle key={i} cx={x} cy={y} r={r} />; })}</g>
);
const discs = (s: string, fill: string) => (
  <g fill={fill}>{s.split('|').map((p, i) => { const [x, y, r] = p.split(',').map(Number); return <circle key={i} cx={x} cy={y} r={r} />; })}</g>
);
const line = (s: string, stroke: string, w = 4) => <path d={poly(s)} fill="none" stroke={stroke} strokeWidth={w} />;
const navy = '#cddae7', sky = '#e4f0fa', amber = '#fde5ca', cream = '#fff5e8', mint = '#cde6dc', pale = '#e2f3e9', peach = '#fadcc1', rose = '#f6cfcf', blush = '#fde1e1';
const americas = (dx: number) => poly('111,405 130,402 155,404 148,418 136,425 128,438 120,434 112,420', dx) + 'Z' + poly('138,441 150,442 160,451 152,466 148,478 143,474 143,460 136,450', dx) + 'Z' + poly('156,403 180,401 170,412 162,415', dx) + 'Z';
const oldWorld = (dx: number) => poly('176,428 190,425 200,432 206,442 196,452 194,464 187,468 184,452 172,443', dx) + 'Z' + poly('178,418 185,408 215,402 264,407 250,416 248,428 238,440 232,446 226,436 218,442 208,434 200,430 180,426', dx) + 'Z';
const australia = (dx: number) => poly('245,462 255,455 264,460 262,469 246,468', dx) + 'Z';
const tinyText = (items: [number, number, string][], fill: string) => (
  <g fontSize="13" fontFamily='"Liberation Sans", sans-serif' fill={fill}>{items.map(([x, y, t]) => <text key={t} x={x} y={y}>{t}</text>)}</g>
);
const gallery: React.ReactNode[] = [
  <>{rects('115,228 149 99', '#fff')}{rects('117,230 145 20|117,280 145 24', '#f4f4f4')}<rect x="115" y="228" width="148" height="98" fill="none" stroke="#e8e8e8" strokeWidth="3" />{rects('123,238 15 6|123,265 18 6|123,294 12 6', '#e4e4e4')}{tinyText([[157, 247, '1234'], [210, 247, '678'], [157, 273, '368'], [210, 273, '3144'], [157, 298, '2620'], [210, 298, '2559'], [157, 320, '971'], [210, 320, '322']], '#dcdcdc')}</>,
  <>{rects('348,238 15 5|348,266 18 6|348,294 12 6', '#e4e4e4')}{rects('372,230 21 19|465,230 12 11|372,266 21 20|436,268 17 16|465,266 21 20|402,300 24 22|465,300 21 19', pale)}{rects('436,230 21 19|372,300 27 25|435,300 27 25', mint)}{rects('402,230 18 16', peach)}{rects('402,266 12 11', amber)}</>,
  <>{rects('598,228 57 27|656,257 57 26|598,314 57 12', mint)}{rects('656,228 57 27|598,285 57 27|656,285 57 27|656,314 57 12', pale)}{rects('598,257 57 26', amber)}<path d="M565 228h148v98H565zM597 228v98M655 228v98" fill="none" stroke="#ddd" strokeWidth="3" /><path d="M597 256h116M597 284h116M597 313h116" stroke="#d4d4d4" strokeWidth="3" />{rects('573,238 15 6|573,265 18 6|573,294 12 6', '#e4e4e4')}{tinyText([[604, 245, '1234'], [663, 245, '546'], [604, 275, '368'], [663, 275, '340'], [604, 302, '2620'], [663, 302, '51890']], '#c3cfc8')}</>,
  <><path d={americas(0) + oldWorld(0) + australia(0)} fill="#f1f1f1" />{discs('117,434,6|120,423,3|138,451,3|155,455,3|180,413,3|190,423,4|227,430,7|241,447,5|238,436,4|201,440,3|252,464,3', '#eab4b8')}{discs('139,424,5|175,423,4|240,428,4|158,453,4', '#fbd9d9')}</>,
  <><path d={americas(225) + australia(225)} fill={rose} /><path d={oldWorld(225)} fill={blush} /></>,
  <><ellipse cx="640" cy="438" rx="43" ry="40.500" fill={sky} /><path d="M640 438H597A43 41 0 0 1 640 397Z" fill={rose} /><path d="M640 438V397A43 41 0 0 1 670 409Z" fill={blush} /><path d="M640 438 670 409A43 41 0 0 1 670 467Z" fill={navy} /></>,
  rects('123,557 72 11|123,580 132 11|123,602 36 11|123,624 105 12', navy),
  <>{rects('351,577 24 61|384,596 24 42|420,619 24 19|456,610 24 28', sky)}{rects('351,557 24 20|384,573 24 23|420,566 24 53|456,585 24 25', navy)}</>,
  <>{rects('570,613 12 39|627,568 12 84|681,624 12 28', navy)}{rects('585,588 12 64|642,599 12 53|696,585 12 67', sky)}{rects('612,540 3 112|666,540 3 112', '#e6e6e6')}</>,
  <>{rects('123,714 63 42|189,714 33 28', '#d8e6f1')}{rects('123,759 63 39|237,776 18 11', navy)}{rects('225,714 30 28|213,776 21 22|237,745 18 28|237,790 18 8', sky)}{rects('213,745 21 28', '#d8e6f1')}{rects('189,745 21 28', blush)}{rects('189,776 21 22', rose)}</>,
  <>{rings('364,742|364,780|416,730|416,770', 14, navy)}{rings('364,731|470,730|416,780', 14, '#d8e6f1')}{rings('470,750|470,795', 14, sky)}<path d="M403 815a14 14 0 0 1 28 0" fill="none" stroke={sky} strokeWidth="3" /></>,
  <>{rings('582,724|611,736|611,796|700,738|672,780', 11, navy)}{rings('582,738|582,791|611,770|671,727|700,749|672,790|700,785', 11, '#dbe9f5')}{rects('639,700 3 112', '#e6e6e6')}</>,
  <>{line('121,890 142,874 176,914 205,893 227,912 260,898', amber)}{line('119,906 140,914 175,891 203,911 228,927 260,921', '#fff0dc')}{line('117,927 142,948 191,925 228,946 261,939', navy)}</>,
  <>{line('342,905 363,909 383,890 405,891|426,906 446,884 463,896 487,891', amber)}{line('342,923 363,920 385,900 404,914|426,922 446,917 463,921 487,910', '#fff0dc')}{line('342,944 364,949 383,933 405,933|426,944 446,932 463,940 487,934', navy)}{rects('414,860 3 112', '#e6e6e6')}</>,
  <>{line('583,898 609,875 635,896 655,887 682,905 700,890', amber)}{line('583,921 608,911 635,939 655,929 682,943 700,921', navy)}{rects([0, 1, 2, 3, 4, 5].map(i => `564,${871 + i * 17} 9 2|708,${871 + i * 17} 9 2`).join('|'), '#e2e2e2')}</>,
  <><path d={poly('114,1077 148,1038 212,1074 264,1060 264,1125 114,1125') + 'Z'} fill={navy} /><path d={poly('114,1084 148,1060 212,1098 264,1070 264,1125 114,1125') + 'Z'} fill={amber} /><path d={poly('114,1104 148,1090 212,1110 264,1098 264,1125 114,1125') + 'Z'} fill={cream} /></>,
  <>{[0, 78].map(d => <g key={d} transform={`translate(${d})`}><path d={poly('339,1077 355,1038 386,1074 411,1060 411,1125 339,1125') + 'Z'} fill={navy} /><path d={poly('339,1084 355,1060 386,1098 411,1070 411,1125 339,1125') + 'Z'} fill={amber} /><path d={poly('339,1104 355,1090 386,1110 411,1098 411,1125 339,1125') + 'Z'} fill={cream} /></g>)}</>,
  <>{rects('585,1078 15 48|609,1064 15 62|633,1089 15 37|657,1039 15 87|681,1075 15 51', navy)}{line('587,1068 614,1046 640,1078 666,1055 694,1076', amber)}{rects([0, 1, 2, 3, 4, 5].map(i => `564,${1030 + i * 17} 9 2|708,${1030 + i * 17} 9 2`).join('|'), '#e2e2e2')}</>,
  <>{rings('171,1209|234,1215|147,1238|180,1249|129,1271', 11, amber)}<path d="M198 1196h26m-13-13v26M186 1227h26m-13-13v26M231 1245h26m-13-13v26M144 1264h26m-13-13v26M198 1261h26m-13-13v26" stroke={mint} strokeWidth="3" /></>,
  rects('348,1273 12 9|363,1259 12 23|378,1235 12 47|393,1207 12 75|408,1196 12 86|423,1207 12 75|438,1235 12 47|453,1259 12 23|468,1273 12 9', mint),
  <>{rects('576,1226 21 14|612,1212 21 28|648,1221 21 22|684,1207 21 35', pale)}{rects('576,1238 21 22|612,1238 21 14|648,1243 21 23|684,1240 21 14', mint)}<path d="M586 1205v65m-8 0h16m-16-65h16M622 1199v79m-8 0h16m-16-79h16M658 1196v82m-8 0h16m-16-82h16M694 1191v90m-8 0h16m-16-90h16" fill="none" stroke="#bdbdbd" strokeWidth="2.500" /></>,
  <>{rects('117,1347 27 22|138,1380 9 23|159,1380 12 23|117,1417 6 22|204,1417 21 22', mint)}{rects('117,1380 18 23|180,1380 42 23|174,1417 12 22', pale)}{rects('165,1347 12 22|213,1347 6 22|237,1380 24 23|162,1417 6 22', peach)}{rects('180,1347 12 22|231,1347 24 22|132,1417 24 22|243,1417 12 22', amber)}</>,
  <>{rects('345,1350 120 22|345,1383 135 23|345,1417 75 22', '#f5f5f5')}{rects('465,1350 18 22|420,1417 63 22', '#fbfbfb')}{rects('345,1355 75 11|345,1389 120 11|345,1422 63 12', mint)}{rects('429,1350 3 22|450,1383 3 23|468,1417 3 22', '#bdbdbd')}</>,
  <>{discs('601,1413,28|662,1370,9', pale)}{discs('604,1374,10|633,1366,15|645,1429,12', mint)}{discs('691,1382,20|647,1397,17', amber)}{discs('676,1412,11', peach)}</>,
];

/* ---------- bottom tabs ---------- */
const sheetTabs: [string, number, number][] = [['p 10-ending journey', 150, 135], ['peak-hours-winter', 146, 127], ['top 10-starting journey', 179, 157], ['avg.trip duartion-user type', 208, 184], ['Static map-zip code', 157, 137], ['top 10-start station', 154, 132], ['top 10-end station', 146, 125]];

const trayIcons = (
  <>
    <svg width="20" height="18" viewBox="0 0 20 18" fill="none" stroke="#fff" strokeWidth="1.500"><path d="M1 6.500a13 13 0 0 1 18 0M4 9.700a8.500 8.500 0 0 1 12 0M6.800 12.700a4.500 4.500 0 0 1 6.400 0" /><circle cx="10" cy="15.300" r="1.200" fill="#fff" /></svg>
    <svg width="22" height="18" viewBox="0 0 22 18" fill="none" stroke="#fff" strokeWidth="1.400"><path d="M1 6.500h3.500L9 2.500v13L4.500 11.500H1zM12 6q2 3 0 6M15 4q3.500 5 0 10M18 2q5 7 0 14" /></svg>
    <svg width="22" height="18" viewBox="0 0 22 18" fill="none" stroke="#fff" strokeWidth="1.500"><path d="M11 4.500h6.500a1.500 1.500 0 0 1 1.500 1.500v7a1.500 1.500 0 0 1-1.500 1.500H5M20.500 7.500v4" /><path d="M2 9c0-4 3-6 8-8 0 6-1 10-5 10M5 8l-4 8" fill="#fff" /></svg>
  </>
);

export default function App() {
  return (
    <Screen>
      <GlobalStyle />
      <TitleBar>
        <AppBadge><TableauMark s={16} mono="#5b9bbf" /></AppBadge>
        <TitleText><Fit w={177}>Tableau Public - MyFirstViz</Fit></TitleText>
        <WindowButtons>
          <Ic s={13} vb="0 0 13 13" sw={1.200}><path d="M0 6.500h12" /></Ic>
          <Ic s={13} vb="0 0 13 13" sw={1.200}><path d="M.8 3.500h8.500v8.500H.8zM3.500 3.500V1h8.700v8.500H9.500" /></Ic>
          <Ic s={13} vb="0 0 13 13" sw={1.200}><path d="m.5.5 12 12m0-12-12 12" /></Ic>
        </WindowButtons>
      </TitleBar>
      <MenuBar>{menus.map(([m, w]) => <Fit key={m} w={w}>{m}</Fit>)}</MenuBar>
      <Toolbar>
        {tools.map(([k, lead, name], i) =>
          k === 's' ? <Divider key={i} $lead={lead} />
            : k === 'c' || k === 'cx' ? <Slot key={i} $lead={lead} $w={8}><Caret $c={k === 'cx' ? '#aaa' : undefined} /></Slot>
              : k === 'box' ? <FitSelect key={i}><Caret $c="#ccc" /></FitSelect>
                : k === 'logo' ? <Slot key={i} $lead={lead}><TableauMark s={18} /></Slot>
                  : <Slot key={i} $lead={lead} $off={k === 'x'}>{toolIcons[name!]}</Slot>)}
      </Toolbar>

      <Workspace>
        <Side>
          <SideTabs>
            <SideTab $active><Fit w={88}>Dashboard</Fit></SideTab>
            <SideTab><Fit w={53}>Layout</Fit><Ic s={11} vb="0 0 10 12" sw={1.200}><path d="M7.500 1 3 6l4.500 5" stroke="#555" /></Ic></SideTab>
          </SideTabs>
          <DevicePanel>
            <DeviceRow $selected><Fit w={56}>Default</Fit></DeviceRow>
            <DeviceRow><Fit w={49}>Phone</Fit></DeviceRow>
            <DeviceButton><Fit w={104}>Device Preview</Fit></DeviceButton>
          </DevicePanel>
          <SizePanel>
            <Heading><Fit w={34}>Size</Fit></Heading>
            <SizeSelect><Fit w={201}>min 420x560 - max 650x860</Fit><Caret /></SizeSelect>
          </SizePanel>
          <SheetsPanel>
            <Heading $inset={18}><Fit w={56}>Sheets</Fit></Heading>
            <Scrolled $top={9}>
              <SheetList>{sheets.map(([s, w], i) => <SheetRow key={i}><SheetGlyph /><Fit w={w}>{s}</Fit></SheetRow>)}</SheetList>
              <SheetTrack><SheetThumb /></SheetTrack>
            </Scrolled>
          </SheetsPanel>
          <ObjectsPanel>
            <Heading $weight={500}><Fit w={60}>Objects</Fit></Heading>
            <Scrolled $top={6}>
              <ObjectList>{objects.map(([o, w, icon]) => <ObjectRow key={o}>{icon}<Fit w={w}>{o}</Fit></ObjectRow>)}</ObjectList>
              <ObjectTrack><Caret $s={4} $c="#999" $up /><ObjectThumb /><Caret $s={4} $c="#444" /></ObjectTrack>
            </Scrolled>
            <Toggle><ToggleSide $on><Fit w={35}>Tiled</Fit></ToggleSide><ToggleSide><Fit w={57}>Floating</Fit></ToggleSide></Toggle>
            <TitleCheck><Box /><Fit w={149}>Show dashboard title</Fit></TitleCheck>
          </ObjectsPanel>
        </Side>

        <Dashboard>
          <DashTitle>
            <TitleLine><b><Fit w={95}>Basic:</Fit></b><Fit w={430}> A static map that plots all bike</Fit></TitleLine>
            <TitleLine><Fit w={605}>stations with a visual indication of the most</Fit></TitleLine>
            <TitleLine><Fit w={620}>popular locations to start and end a journey,</Fit></TitleLine>
            <TitleLine><Fit w={484}>with zip code data overlaid on top.</Fit><Light><Fit w={135}>Static map-</Fit></Light></TitleLine>
            <TitleLine><Light><Fit w={95}>zip code</Fit></Light></TitleLine>
          </DashTitle>
          <MapFrame>
            <ZipMap />
            <Attribution><Fit w={201}>© 2023 Mapbox © OpenStreetMap</Fit></Attribution>
          </MapFrame>
        </Dashboard>

        <Blank>
          <VTrack><VThumb /></VTrack>
          <ShowMe>
            <ShowTab>
              <svg width="14" height="15" viewBox="0 0 14 14" preserveAspectRatio="none"><path d="M0 0h11v2.500H0z" fill="#8a6a9c" /><path d="M0 3.700h14v2.700H0z" fill="#7fa6c9" /><path d="M0 7.400h5v2.600H0z" fill="#f7a777" /><path d="M0 11.200h8V14H0z" fill="#f56b78" /></svg>
              <Fit w={71}>Show Me</Fit>
            </ShowTab>
            <ShowBody>
              <Gallery>
                {gallery.map((g, i) => (
                  <Thumb key={i}><svg width="67" height="50" preserveAspectRatio="none" viewBox={`${88 + 225 * (i % 3)} ${208 + 159.7 * Math.floor(i / 3)} 201 140`}>{g}</svg></Thumb>
                ))}
              </Gallery>
              <SelectView><Fit w={81}>Select view</Fit></SelectView>
            </ShowBody>
          </ShowMe>
        </Blank>
      </Workspace>

      <TabStrip>
        <SheetTab $w={163} $pad={10}><Ic s={10} vb="0 0 10 12" sw={1}><rect x="1.500" y="1" width="7" height="10" rx="2" /><path d="M1.500 4h7" /></Ic><Fit w={86}>Data Source</Fit></SheetTab>
        {sheetTabs.map(([t, w, tw], i) => <SheetTab key={t} $w={w} $pad={i ? 6 : 0}><Fit w={tw}>{t}</Fit></SheetTab>)}
        {['1a', '1b', '1c'].map((n, i) => <SheetTab key={n} $w={i ? 131 : 130} $pad={7}><DashGlyph /><Fit w={94}>{`Dashboard ${n}`}</Fit></SheetTab>)}
        <SheetTab $w={129} $pad={7} $on><DashGlyph /><Fit w={98}>Dashboard 1d</Fit></SheetTab>
        <SheetTab $w={32} $pad={8}><Ic s={16} vb="0 0 16 16" sw={1.100}><path d="M9 11H1V1h11v8M4 8.500v-2M6.500 8.500v-5M9 8.500V5M9 12h7M12.500 8.500v7" /></Ic></SheetTab>
        <SheetTab $w={32} $pad={8}><Ic s={16} vb="0 0 16 16" sw={1.100}><path d="M9 11H1V1h11v8M1 6h11M6.500 1v10M9 12h7M12.500 8.500v7" /></Ic></SheetTab>
        <SheetTab $w={32} $pad={8}><Ic s={16} vb="0 0 16 16" sw={1.100}><path d="M8 11.500C5 10 3 10 1 11V1.500C3 1 5 1 6.500 3 8 1 10 1 12 1.500V8M6.500 3v8M9 12h7M12.500 8.500v7" /></Ic></SheetTab>
      </TabStrip>
      <StatusBar>
        <StatusCell $w={157} $gap={9}>
          <Ic s={11} vb="0 0 11 13" sw={1.100}><circle cx="5.500" cy="3.300" r="2.500" /><path d="M1 12.500v-2q0-3 4.500-3t4.500 3v2z" /></Ic><Fit w={88}>kangna parekh</Fit><Grow /><Caret $s={4} $c="#111" />
        </StatusCell>
        <StatusCell $w={32} /><StatusCell $w={32} /><StatusCell $w={57} />
        <StatusCell $w={71} $gap={8}>
          <svg width="58" height="8" viewBox="0 0 58 8" fill="#555"><path d="M1 0h1.500v8H1zM8 0v8L3 4zM24 0v8L19 4zM36 0v8l5-4zM50 0v8l5-4zM55.500 0H57v8h-1.500z" /></svg>
        </StatusCell>
        <StatusCell $w={70} $gap={11}>
          <svg width="58" height="11" viewBox="0 0 58 11" fill="#bdbdbd"><path d="M2 0h3v3H2zM6 0h3v3H6zM10 0h3v3h-3zM2 4h3v3H2zM6 4h3v3H6zM10 4h3v3h-3zM2 8h3v3H2zM6 8h3v3H6zM10 8h3v3h-3zM24 0h11v7H24zM24 8h3v3h-3zM28 8h3v3h-3zM32 8h3v3h-3z" /><path d="M46 0h11v11H46z" fill="#555" /></svg>
        </StatusCell>
      </StatusBar>

      <Taskbar>
        <Weather>
          <svg width="32" height="28" viewBox="0 0 32 28"><circle cx="21" cy="9" r="8.500" fill="#f39a1e" /><path d="M8 27a7 7 0 0 1-1.500-13.500A8.500 8.500 0 0 1 22.500 12 7.500 7.500 0 0 1 23.500 27z" fill="#b9cdf3" /><path d="M8 27a7 7 0 0 1-3-9q9-4 14 4 4 6 5 5z" fill="#dbe7fb" /></svg>
          <div><div><Fit w={32}>22°C</Fit></div><Muted><Fit w={95}>Mostly cloudy</Fit></Muted></div>
        </Weather>
        <StartSlot><svg width="29" height="29" viewBox="0 0 29 29"><defs><linearGradient id="win" x2="1" y2="1"><stop stopColor="#7fe0ff" /><stop offset="1" stopColor="#0a8cf5" /></linearGradient></defs><path d="M0 0h14v14H0zM15 0h14v14H15zM0 15h14v14H0zM15 15h14v14H15z" fill="url(#win)" /></svg></StartSlot>
        <Search>
          <Ic s={20} vb="0 0 20 20" sw={2}><circle cx="9" cy="8" r="6.800" stroke="#222" /><path d="m13.500 13.500 5 5.500" stroke="#222" /></Ic>
          <Fit w={51}>Search</Fit><Grow />
          <svg width="26" height="26" viewBox="0 0 26 26"><defs><linearGradient id="bing" x2="1" y2="1"><stop stopColor="#25c4e8" /><stop offset="1" stopColor="#2356d8" /></linearGradient></defs><path d="M13 1.500A11.500 11.500 0 1 1 7.500 23L1.500 24.500V13A11.500 11.500 0 0 1 13 1.500z" fill="#fff" stroke="url(#bing)" strokeWidth="2" /><path d="m9 5 3 1.500v9l6-3-3-1.500-1-3 5 2.500q1.500 4-1 5.500L12.500 20 9 18z" fill="url(#bing)" /></svg>
        </Search>
        <Apps>
          <AppSlot><svg width="30" height="29" viewBox="0 0 30 29"><path d="M8 1h21v19H8z" fill="#f2f2f2" /><path d="M1 8h20v19H1z" fill="#666" opacity=".9" /><path d="M8 8h13v12H8z" fill="#bbb" /></svg></AppSlot>
          <AppSlot><svg width="30" height="29" viewBox="0 0 30 29"><path d="M15 1a14 13.500 0 1 1-8 24.500L1.500 28l1.500-7A14 13.500 0 0 1 15 1z" fill="#6a62c8" /><rect x="7" y="9.500" width="11" height="11" rx="2" fill="#fff" /><path d="m19 13.500 4-3v9l-4-3z" fill="#fff" /></svg></AppSlot>
          <AppSlot $mark><svg width="30" height="29" viewBox="0 0 30 29"><path d="M0 4q0-2 2-2h8l3 3h15q2 0 2 2v19q0 2-2 2H2q-2 0-2-2z" fill="#e8a317" /><path d="M0 8h30v18q0 2-2 2H2q-2 0-2-2z" fill="#ffd04d" /><path d="M6 28v-5q0-3 3-3h12q3 0 3 3v5z" fill="#1a7fd6" /><path d="M9 23h12v2H9z" fill="#0b5aa5" /></svg></AppSlot>
          <AppSlot><svg width="30" height="29" viewBox="0 0 30 29"><defs><linearGradient id="edge" x2="1" y2=".4"><stop stopColor="#1b9de2" /><stop offset=".6" stopColor="#35c6d5" /><stop offset="1" stopColor="#6fdc5a" /></linearGradient></defs><circle cx="15" cy="14.500" r="14" fill="#1277cf" /><path d="M1 14C2 5 8 .5 15 .5c8 0 14 6 14 12 0 5-4 7-8 7-3 0-4-1-4-2s1.500-2 1-4c-.6-3-4-5-8-5C5 8.500 2 11 1 14z" fill="url(#edge)" /><path d="M12 14c-3 6 1 13 9 12q4-1 6-4c-5 3-13 1-13-6z" fill="#0f4fa0" /></svg></AppSlot>
          <AppSlot><svg width="30" height="29" viewBox="0 0 30 29"><path d="M9 6V1h12v5" fill="none" stroke="#2fa3e8" strokeWidth="2.200" /><path d="M1 6h28v19q0 4-4 4H5q-4 0-4-4z" fill="#f8f8f8" /><path d="M9 11h5.500v5.500H9z" fill="#f25022" /><path d="M15.500 11H21v5.500h-5.500z" fill="#7fba00" /><path d="M9 17.500h5.500V23H9z" fill="#00a4ef" /><path d="M15.500 17.500H21V23h-5.500z" fill="#ffb900" /></svg></AppSlot>
          <AppSlot><svg width="30" height="29" viewBox="0 0 30 29"><path d="M0 0h30v29H0z" fill="#0096d6" /><text x="15" y="18" textAnchor="middle" fontSize="10" fontStyle="italic" fontFamily="Open Sans" fill="#fff">my<tspan fontWeight="700" fontSize="12">hp</tspan></text></svg></AppSlot>
          <AppSlot><svg width="34" height="29" viewBox="-1 0 34 29" overflow="visible"><circle cx="15" cy="15" r="14" fill="#fff" /><circle cx="15" cy="15" r="12.500" fill="#1c8fd1" /><text x="15" y="23" textAnchor="middle" fontSize="23" fontWeight="700" fontFamily="Open Sans" fill="#fff">?</text><circle cx="27" cy="4" r="9.500" fill="#ffb912" /></svg></AppSlot>
          <AppSlot><svg width="30" height="29" viewBox="0 0 30 29"><path d="M2 0 15 7 28 0v21L15 29 2 21z" fill="#c2202c" /><path d="M8 9l7 4.500L22 9v9l-7 4.500L8 18z" fill="#1c1c1c" /></svg></AppSlot>
          <AppSlot $on><svg width="28" height="29" viewBox="0 0 28 29"><path d="M0 0h28v29H0z" fill="#fff" /><g transform="translate(2.500 3) scale(1.150)">{plus(10, 10, 3, '#2a5f8a', 1.500)}{plus(5, 5.200, 2.200, '#2a5f8a')}{plus(15, 5.200, 2.200, '#2a5f8a')}{plus(5, 14.800, 2.200, '#2a5f8a')}{plus(15, 14.800, 2.200, '#2a5f8a')}{plus(10, 2, 1.800, '#5584a8')}{plus(10, 18, 1.800, '#5584a8')}{plus(2, 10, 1.800, '#5584a8')}{plus(18, 10, 1.800, '#5584a8')}</g></svg></AppSlot>
          <AppSlot $mark><svg width="30" height="29" viewBox="0 0 30 29" overflow="visible"><circle cx="15" cy="15" r="14" fill="#34a853" /><path d="M3 8a14 14 0 0 1 24-.3L15 15z" fill="#ea4335" /><path d="M27.500 8.500A14 14 0 0 1 14 29l7-11-1-9.500z" fill="#fbbc05" /><circle cx="15" cy="15" r="6.500" fill="#fff" /><circle cx="15" cy="15" r="5.200" fill="#4285f4" /><circle cx="25" cy="4" r="9.800" fill="#5f8a55" /><circle cx="26" cy="6" r="4" fill="#d8d8cc" /><circle cx="25" cy="1" r="2.500" fill="#a7c29b" /></svg></AppSlot>
        </Apps>
        <Tray>
          <Ic s={14} vb="0 0 14 14" sw={1.700}><path d="m1 10 6-6 6 6" /></Ic>
          <TrayCloud><svg width="22" height="20" viewBox="0 0 22 20"><path d="M4 13a4 4 0 0 1 0-7 6 6 0 0 1 11-1 4 4 0 0 1 2 8z" fill="#a9a9a9" /><circle cx="14.500" cy="13.500" r="5.800" fill="#1976c9" stroke="#fff" /><path d="M11.500 13.500a3 3 0 0 1 5.500-1.500M17.500 13.500a3 3 0 0 1-5.500 1.500" fill="none" stroke="#fff" strokeWidth="1.300" /></svg></TrayCloud>
          <Lang><Fit w={29}>ENG</Fit><br /><Fit w={18}>US</Fit></Lang>
          <TrayStatus>{trayIcons}</TrayStatus>
          <Clock><Fit w={64}>11:15 AM</Fit><br /><Fit w={78}>2023-09-07</Fit></Clock>
          <Count>3</Count>
        </Tray>
      </Taskbar>
    </Screen>
  );
}
